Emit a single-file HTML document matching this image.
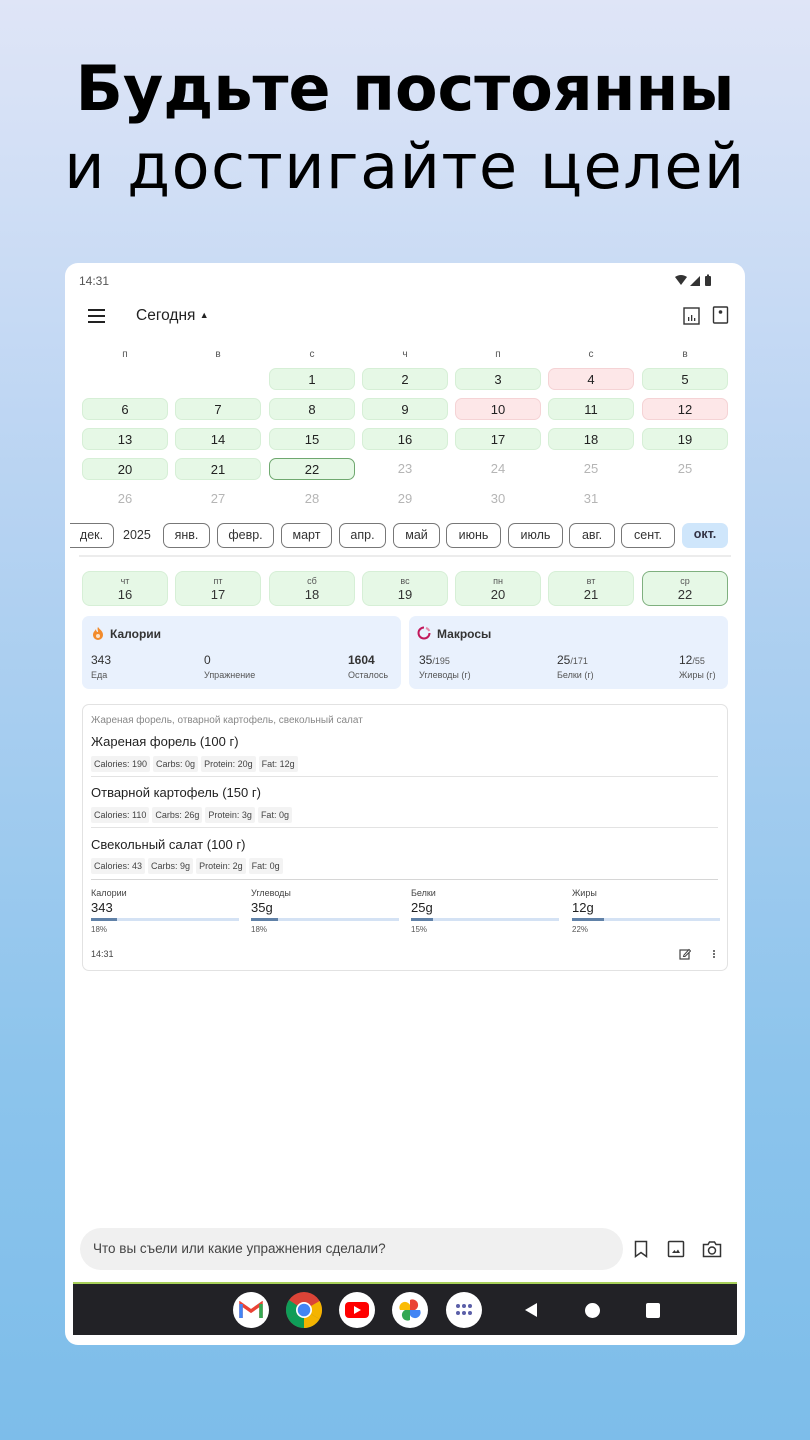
<!DOCTYPE html>
<html><head><meta charset="utf-8"><style>
*{box-sizing:border-box;margin:0;padding:0}
body{width:810px;height:1440px;position:relative;overflow:hidden;font-family:"Liberation Sans","DejaVu Sans",sans-serif;background:linear-gradient(180deg,#dfe5f7 0%,#b7d3f2 35%,#8cc4ec 75%,#7dbdea 100%);}
.a{position:absolute}
.t1{left:0;width:810px;text-align:center;top:52px;font:bold 62px "DejaVu Sans",sans-serif;color:#000;letter-spacing:0px}
.t2{left:0;width:810px;text-align:center;top:130px;font:62px "DejaVu Sans",sans-serif;color:#000;letter-spacing:1.5px}
.card{left:65px;top:263px;width:680px;height:1082px;background:#fff;border-radius:13px}
.c{position:absolute;text-align:center;font-size:13px;color:#222;height:22px;line-height:22px;width:86px;border-radius:7px}
.g{background:#e6f8e6;border:1px solid #d6efd6}
.r{background:#fde7e8;border:1px solid #f5d3d5}
.m{color:#b5b5b5}
.dh{position:absolute;width:86px;text-align:center;font-size:10px;color:#555}
.chip{position:absolute;top:523px;height:25px;line-height:23px;border:1px solid #777;border-radius:7px;font-size:12.5px;color:#333;text-align:center}
.wk{position:absolute;top:571px;width:86px;height:35px;border-radius:8px;background:#e6f8e6;border:1px solid #d6efd6;text-align:center}
.wk b{display:block;font-weight:normal;font-size:9px;color:#555;margin-top:4px;line-height:10px}
.wk span{display:block;font-size:13px;color:#333;line-height:16px;margin-top:1px}
.sum{position:absolute;top:616px;height:73px;background:#e9f1fd;border-radius:7px}
.s{font-size:12px;color:#333;position:absolute}
.sm{font-size:9px;color:#555;position:absolute}
.tag{display:inline-block;background:#f3f3f3;font-size:9px;color:#444;padding:0 3px;height:16px;line-height:16px;margin-right:3px;border-radius:2px}
.fn{position:absolute;left:91px;font-size:13px;color:#222}
.tr{position:absolute;left:91px}
.hr{position:absolute;left:91px;width:627px;height:1px;background:#e3e3e3}
.st{position:absolute;width:148px}
.st .l{font-size:9px;color:#444}
.st .v{font-size:13px;color:#222;margin-top:2px}
.st .bar{height:3px;background:#d4e2f4;margin-top:3px;position:relative}
.st .bar i{position:absolute;left:0;top:0;height:3px;background:#6182a8}
.st .p{font-size:8px;color:#555;margin-top:4px}
</style></head><body>
<div class="a t1">Будьте постоянны</div>
<div class="a t2">и достигайте целей</div>
<div class="a card"></div>

<div class="a" style="left:79px;top:274px;font-size:12px;color:#555">14:31</div>
<svg class="a" style="left:674px;top:274px" width="42" height="13" viewBox="0 0 42 13"><path d="M1 3 Q7 -1 13 3 L7 11Z" fill="#333"/><path d="M16 12 L26 2 L26 12Z" fill="#333"/><rect x="31" y="2" width="6" height="10" rx="1" fill="#333"/><rect x="33" y="0.5" width="2" height="2" fill="#333"/></svg>

<svg class="a" style="left:88px;top:309px" width="18" height="14"><rect y="0" width="17" height="2" fill="#222"/><rect y="6" width="17" height="2" fill="#222"/><rect y="12" width="17" height="2" fill="#222"/></svg>
<div class="a" style="left:136px;top:307px;font-size:15.5px;color:#222">Сегодня <span style="font-size:9px;vertical-align:2px">▲</span></div>
<svg class="a" style="left:683px;top:307px" width="18" height="18"><rect x="1" y="1" width="15" height="16" fill="none" stroke="#333" stroke-width="1.4"/><rect x="5" y="10" width="1.3" height="4" fill="#333"/><rect x="8" y="8" width="1.3" height="6" fill="#333"/><rect x="11" y="11" width="1.3" height="3" fill="#333"/></svg>
<svg class="a" style="left:712px;top:306px" width="18" height="18"><rect x="1.5" y="1" width="14" height="16" rx="1" fill="none" stroke="#333" stroke-width="1.4"/><circle cx="8.5" cy="6" r="1.8" fill="#333"/></svg>

<div class="dh" style="left:82px;top:349px">п</div><div class="dh" style="left:175px;top:349px">в</div><div class="dh" style="left:269px;top:349px">с</div><div class="dh" style="left:362px;top:349px">ч</div><div class="dh" style="left:455px;top:349px">п</div><div class="dh" style="left:548px;top:349px">с</div><div class="dh" style="left:642px;top:349px">в</div>

<div class="c g" style="left:269px;top:368px">1</div><div class="c g" style="left:362px;top:368px">2</div><div class="c g" style="left:455px;top:368px">3</div><div class="c r" style="left:548px;top:368px">4</div><div class="c g" style="left:642px;top:368px">5</div>
<div class="c g" style="left:82px;top:398px">6</div><div class="c g" style="left:175px;top:398px">7</div><div class="c g" style="left:269px;top:398px">8</div><div class="c g" style="left:362px;top:398px">9</div><div class="c r" style="left:455px;top:398px">10</div><div class="c g" style="left:548px;top:398px">11</div><div class="c r" style="left:642px;top:398px">12</div>
<div class="c g" style="left:82px;top:428px">13</div><div class="c g" style="left:175px;top:428px">14</div><div class="c g" style="left:269px;top:428px">15</div><div class="c g" style="left:362px;top:428px">16</div><div class="c g" style="left:455px;top:428px">17</div><div class="c g" style="left:548px;top:428px">18</div><div class="c g" style="left:642px;top:428px">19</div>
<div class="c g" style="left:82px;top:458px">20</div><div class="c g" style="left:175px;top:458px">21</div><div class="c g" style="left:269px;top:458px;border-color:#6fa86f">22</div><div class="c m" style="left:362px;top:458px">23</div><div class="c m" style="left:455px;top:458px">24</div><div class="c m" style="left:548px;top:458px">25</div><div class="c m" style="left:642px;top:458px">25</div>
<div class="c m" style="left:82px;top:488px">26</div><div class="c m" style="left:175px;top:488px">27</div><div class="c m" style="left:269px;top:488px">28</div><div class="c m" style="left:362px;top:488px">29</div><div class="c m" style="left:455px;top:488px">30</div><div class="c m" style="left:548px;top:488px">31</div>

<div class="chip" style="left:70px;width:44px;border-left:none;border-radius:0 7px 7px 0">дек.</div>
<div class="a" style="left:123px;top:528px;font-size:12.5px;color:#333">2025</div>
<div class="chip" style="left:163px;width:47px">янв.</div>
<div class="chip" style="left:217px;width:57px">февр.</div>
<div class="chip" style="left:281px;width:51px">март</div>
<div class="chip" style="left:339px;width:47px">апр.</div>
<div class="chip" style="left:393px;width:47px">май</div>
<div class="chip" style="left:446px;width:55px">июнь</div>
<div class="chip" style="left:508px;width:55px">июль</div>
<div class="chip" style="left:569px;width:46px">авг.</div>
<div class="chip" style="left:621px;width:54px">сент.</div>
<div class="chip" style="left:682px;width:46px;border:none;background:#cfe6fb;font-weight:bold;color:#334">окт.</div>
<div class="a" style="left:79px;top:555px;width:652px;height:2px;background:#ececec"></div>

<div class="wk" style="left:82px"><b>чт</b><span>16</span></div>
<div class="wk" style="left:175px"><b>пт</b><span>17</span></div>
<div class="wk" style="left:269px"><b>сб</b><span>18</span></div>
<div class="wk" style="left:362px"><b>вс</b><span>19</span></div>
<div class="wk" style="left:455px"><b>пн</b><span>20</span></div>
<div class="wk" style="left:548px"><b>вт</b><span>21</span></div>
<div class="wk" style="left:642px;border-color:#7fb07f"><b>ср</b><span>22</span></div>

<div class="sum" style="left:82px;width:319px"></div>
<svg class="a" style="left:91px;top:626px" width="14" height="14"><path d="M7 1 C9 4 12 5 12 9 A5 5 0 0 1 2 9 C2 6 4 5 5 3 C5 5 6 6 7 6 C7 4 6 3 7 1Z" fill="#f28b2c"/><circle cx="7" cy="10" r="2" fill="#fde3c8"/></svg>
<div class="s" style="left:110px;top:627px;font-weight:bold">Калории</div>
<div class="s" style="left:91px;top:653px">343</div><div class="sm" style="left:91px;top:670px">Еда</div>
<div class="s" style="left:204px;top:653px">0</div><div class="sm" style="left:204px;top:670px">Упражнение</div>
<div class="s" style="left:348px;top:653px;font-weight:bold">1604</div><div class="sm" style="left:348px;top:670px">Осталось</div>

<div class="sum" style="left:409px;width:319px"></div>
<svg class="a" style="left:417px;top:626px" width="14" height="14"><path d="M7 1.5 A5.5 5.5 0 1 0 12.5 7" fill="none" stroke="#c2185b" stroke-width="2"/><path d="M9 2 A5.5 5.5 0 0 1 12.3 5" fill="none" stroke="#e48aa9" stroke-width="2"/></svg>
<div class="s" style="left:437px;top:627px;font-weight:bold">Макросы</div>
<div class="s" style="left:419px;top:653px">35<span style="font-size:9px;color:#555">/195</span></div><div class="sm" style="left:419px;top:670px">Углеводы (г)</div>
<div class="s" style="left:557px;top:653px">25<span style="font-size:9px;color:#555">/171</span></div><div class="sm" style="left:557px;top:670px">Белки (г)</div>
<div class="s" style="left:679px;top:653px">12<span style="font-size:9px;color:#555">/55</span></div><div class="sm" style="left:679px;top:670px">Жиры (г)</div>

<div class="a" style="left:82px;top:704px;width:646px;height:267px;border:1px solid #e2e2e2;border-radius:7px"></div>
<div class="a" style="left:91px;top:715px;font-size:10px;color:#888">Жареная форель, отварной картофель, свекольный салат</div>
<div class="fn" style="top:734px">Жареная форель (100 г)</div>
<div class="tr" style="top:754px"><span class="tag">Calories: 190</span><span class="tag">Carbs: 0g</span><span class="tag">Protein: 20g</span><span class="tag">Fat: 12g</span></div>
<div class="hr" style="top:776px"></div>
<div class="fn" style="top:785px">Отварной картофель (150 г)</div>
<div class="tr" style="top:805px"><span class="tag">Calories: 110</span><span class="tag">Carbs: 26g</span><span class="tag">Protein: 3g</span><span class="tag">Fat: 0g</span></div>
<div class="hr" style="top:827px"></div>
<div class="fn" style="top:837px">Свекольный салат (100 г)</div>
<div class="tr" style="top:856px"><span class="tag">Calories: 43</span><span class="tag">Carbs: 9g</span><span class="tag">Protein: 2g</span><span class="tag">Fat: 0g</span></div>
<div class="hr" style="top:879px;background:#d6d6d6"></div>

<div class="st" style="left:91px;top:888px"><div class="l">Калории</div><div class="v">343</div><div class="bar"><i style="width:26px"></i></div><div class="p">18%</div></div>
<div class="st" style="left:251px;top:888px"><div class="l">Углеводы</div><div class="v">35g</div><div class="bar"><i style="width:27px"></i></div><div class="p">18%</div></div>
<div class="st" style="left:411px;top:888px"><div class="l">Белки</div><div class="v">25g</div><div class="bar"><i style="width:22px"></i></div><div class="p">15%</div></div>
<div class="st" style="left:572px;top:888px"><div class="l">Жиры</div><div class="v">12g</div><div class="bar"><i style="width:32px"></i></div><div class="p">22%</div></div>

<div class="a" style="left:91px;top:949px;font-size:9px;color:#444">14:31</div>
<svg class="a" style="left:679px;top:948px" width="12" height="12"><rect x="1" y="2" width="9" height="9" fill="none" stroke="#444" stroke-width="1.2"/><path d="M5 7 L10 1.5 L11.5 3 L6 8.5 L4.5 8.5Z" fill="#fff" stroke="#444" stroke-width="1"/></svg>
<svg class="a" style="left:712px;top:949px" width="4" height="10"><circle cx="2" cy="2" r="1" fill="#444"/><circle cx="2" cy="5" r="1" fill="#444"/><circle cx="2" cy="8" r="1" fill="#444"/></svg>

<div class="a" style="left:80px;top:1228px;width:543px;height:42px;border-radius:21px;background:#f0f0f0"></div>
<div class="a" style="left:93px;top:1241px;font-size:13.5px;color:#444">Что вы съели или какие упражнения сделали?</div>
<svg class="a" style="left:633px;top:1240px" width="16" height="18"><path d="M2.5 1.5 H13.5 V16.5 L8 12.5 L2.5 16.5Z" fill="none" stroke="#333" stroke-width="1.5"/></svg>
<svg class="a" style="left:667px;top:1240px" width="18" height="18"><rect x="1.5" y="1.5" width="15" height="15" rx="1" fill="none" stroke="#333" stroke-width="1.5"/><path d="M5 13 L7.5 10 L9 12 L11 9.5 L13 13Z" fill="#333"/></svg>
<svg class="a" style="left:702px;top:1240px" width="20" height="18"><path d="M1.5 4.5 H6 L7.5 2 H12.5 L14 4.5 H18.5 V16.5 H1.5Z" fill="none" stroke="#333" stroke-width="1.5"/><circle cx="10" cy="10.5" r="3.5" fill="none" stroke="#333" stroke-width="1.5"/></svg>

<div class="a" style="left:73px;top:1282px;width:664px;height:53px;background:#222226;border-top:2px solid #a8d05a"></div>
<div class="a" style="left:233px;top:1292px;width:36px;height:36px;border-radius:50%;background:#fff"></div>
<svg class="a" style="left:239px;top:1301px" width="24" height="18"><path d="M2 17 V3 L12 10 L22 3 V17" fill="none" stroke="#ea4335" stroke-width="3.5"/><path d="M2 3 V17" stroke="#4285f4" stroke-width="3.5"/><path d="M22 3 V17" stroke="#34a853" stroke-width="3.5"/></svg>
<svg class="a" style="left:286px;top:1292px" width="36" height="36"><circle cx="18" cy="18" r="18" fill="#db4437"/><path d="M18 18 L2.4 27 A18 18 0 0 1 3 8Z" fill="#0f9d58"/><path d="M18 18 L2.4 27 A18 18 0 0 0 33.6 27Z" fill="#0f9d58"/><path d="M18 18 L33.6 27 A18 18 0 0 1 18 36 L18 18Z" fill="#f4b400"/><path d="M18 18 L33.6 9 A18 18 0 0 1 33.6 27Z" fill="#f4b400"/><circle cx="18" cy="18" r="8" fill="#fff"/><circle cx="18" cy="18" r="6.3" fill="#4285f4"/></svg>
<div class="a" style="left:339px;top:1292px;width:36px;height:36px;border-radius:50%;background:#fff"></div>
<svg class="a" style="left:344px;top:1300px" width="26" height="20"><rect x="1" y="2" width="24" height="16" rx="4" fill="#f00"/><path d="M10 6 L17 10 L10 14Z" fill="#fff"/></svg>
<div class="a" style="left:392px;top:1292px;width:36px;height:36px;border-radius:50%;background:#fff"></div>
<svg class="a" style="left:398px;top:1298px" width="24" height="24"><path d="M12 12 H22 A5 5 0 0 1 12 17Z" fill="#4285f4"/><path d="M12 12 V22 A5 5 0 0 1 7 12Z" fill="#34a853"/><path d="M12 12 H2 A5 5 0 0 1 12 7Z" fill="#fbbc05"/><path d="M12 12 V2 A5 5 0 0 1 17 12Z" fill="#ea4335"/></svg>
<div class="a" style="left:446px;top:1292px;width:36px;height:36px;border-radius:50%;background:#fff"></div>
<svg class="a" style="left:455px;top:1303px" width="18" height="14"><g fill="#5b5fa8"><circle cx="3" cy="3" r="2"/><circle cx="9" cy="3" r="2"/><circle cx="15" cy="3" r="2"/><circle cx="3" cy="10" r="2"/><circle cx="9" cy="10" r="2"/><circle cx="15" cy="10" r="2"/></g></svg>
<svg class="a" style="left:524px;top:1302px" width="14" height="16"><path d="M13 1 V15 L1 8Z" fill="#fff"/></svg>
<div class="a" style="left:585px;top:1303px;width:15px;height:15px;border-radius:50%;background:#fff"></div>
<div class="a" style="left:646px;top:1303px;width:14px;height:15px;border-radius:2px;background:#fff"></div>
</body></html>
